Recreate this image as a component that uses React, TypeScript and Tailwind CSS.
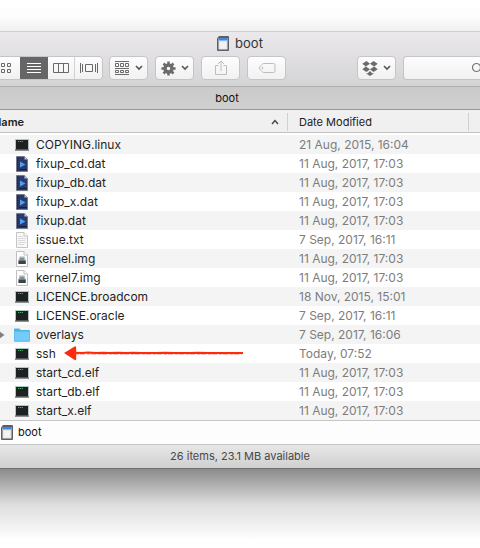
import type { ReactNode } from "react";

type Kind = "exec" | "data" | "text" | "disk" | "folder";

const files: { name: string; date: string; kind: Kind; marked?: boolean }[] = [
  { name: "COPYING.linux", date: "21 Aug, 2015, 16:04", kind: "exec" },
  { name: "fixup_cd.dat", date: "11 Aug, 2017, 17:03", kind: "data" },
  { name: "fixup_db.dat", date: "11 Aug, 2017, 17:03", kind: "data" },
  { name: "fixup_x.dat", date: "11 Aug, 2017, 17:03", kind: "data" },
  { name: "fixup.dat", date: "11 Aug, 2017, 17:03", kind: "data" },
  { name: "issue.txt", date: "7 Sep, 2017, 16:11", kind: "text" },
  { name: "kernel.img", date: "11 Aug, 2017, 17:03", kind: "disk" },
  { name: "kernel7.img", date: "11 Aug, 2017, 17:03", kind: "disk" },
  { name: "LICENCE.broadcom", date: "18 Nov, 2015, 15:01", kind: "exec" },
  { name: "LICENSE.oracle", date: "7 Sep, 2017, 16:11", kind: "exec" },
  { name: "overlays", date: "7 Sep, 2017, 16:06", kind: "folder" },
  { name: "ssh", date: "Today, 07:52", kind: "exec", marked: true },
  { name: "start_cd.elf", date: "11 Aug, 2017, 17:03", kind: "exec" },
  { name: "start_db.elf", date: "11 Aug, 2017, 17:03", kind: "exec" },
  { name: "start_x.elf", date: "11 Aug, 2017, 17:03", kind: "exec" },
];

function FileIcon({ kind }: { kind: Kind }) {
  return (
    <svg width="16" height="16" viewBox="0 0 16 16" className="shrink-0" aria-hidden="true">
      {kind === "exec" && (
        <>
          <rect x="1" y="2" width="14" height="12" fill="#b4c4c9" />
          <rect x="1" y="12" width="14" height="2" fill="#8d8f90" />
          <rect x="2" y="3" width="12" height="9.5" fill="#1e2121" />
          <path d="M4 4.5h5" stroke="#3fae55" strokeDasharray="1.3 .6" />
        </>
      )}
      {kind === "data" && (
        <>
          <path d="M2.5.5h8l3 3v12h-11z" fill="#2b3a6b" stroke="#767b8c" />
          <path d="M10.5.5v3h3z" fill="#c3c9da" />
          <path d="M3.7 2v13" stroke="#10182f" strokeDasharray="1 1" />
          <path d="M6 5.5l5.5 3L6 11.5z" fill="#4f9ff0" />
          <path d="M5 13.5h8" stroke="#161f3e" />
        </>
      )}
      {kind === "text" && (
        <>
          <path d="M2.5.5h7.5l3.5 3.5v11.5h-11z" fill="#f8f8f8" stroke="#c4c4c4" />
          <path d="M10 .5v3.5h3.5" fill="#fff" stroke="#c4c4c4" />
          <path d="M4 4.5h5M4 6.5h8M4 8.5h7M4 10.5h8M4 12.5h6" stroke="#dadada" />
        </>
      )}
      {kind === "disk" && (
        <>
          <path d="M2.5.5h7.5l3.5 3.5v11.5h-11z" fill="#fdfdfd" stroke="#c0c0c0" />
          <path d="M10 .5v3.5h3.5" fill="#fff" stroke="#c0c0c0" />
          <path d="M5.5 5.5h5l1.3 4.5H4.4z" fill="#a9b6ba" />
          <path d="M4.4 9.5h7.4v3.5H4.4z" fill="#3c4245" />
          <path d="M6 8h4" stroke="#56646a" />
        </>
      )}
      {kind === "folder" && (
        <>
          <path d="M0 2.5q0-.9.9-.9h4.4l1.3 1.3h8.5q.9 0 .9.9V14q0 .8-.8.8H.8Q0 14.8 0 14z" fill="#4fb5e6" />
          <path d="M.5 4.6h15v9.2H.5z" fill="#72ccf7" />
        </>
      )}
    </svg>
  );
}

function CardIcon() {
  return (
    <svg width="12" height="16" viewBox="0 0 12 16" className="shrink-0" aria-hidden="true">
      <path d="M2 0h9q1 0 1 1v13q0 1-1 1H1q-1 0-1-1V2.5z" fill="#5c5f63" />
      <path d="M1.5 2h9v11.5h-9z" fill="#e6e6e6" />
      <path d="M3 6h6v6.5H3z" fill="#f3f3f3" />
      <path d="M1.5 2h9v2h-9z" fill="#4388df" />
      <path d="M1.5 4h9v1h-9z" fill="#8bb7eb" />
    </svg>
  );
}

function Chevron() {
  return (
    <svg width="8" height="6" viewBox="0 0 8 6" fill="none" stroke="#555" strokeWidth="1.6" aria-hidden="true">
      <path d="M1 1l3 3 3-3" />
    </svg>
  );
}

function ToolButton({ label, children }: { label: string; children: ReactNode }) {
  return (
    <button
      type="button"
      aria-label={label}
      className="flex h-6 w-[39px] shrink-0 items-center justify-center gap-[5px] rounded-[4px] border border-[#c6c5c6] bg-linear-to-b from-[#fdfdfd] to-[#f2f1f2]"
    >
      {children}
    </button>
  );
}

function ViewSwitch() {
  return (
    <div className="-ml-2 flex h-6 w-[111px] shrink-0 overflow-hidden rounded-[4px] border border-[#c6c5c6] bg-linear-to-b from-[#fdfdfd] to-[#f2f1f2]">
      <button type="button" aria-label="Icon view" className="flex w-[27px] items-center justify-center pr-[2px]">
        <svg width="12" height="12" viewBox="0 0 12 12" fill="none" stroke="#696969" aria-hidden="true">
          <path d="M1.5 1.5h3v3h-3zM7.5 1.5h3v3h-3zM1.5 7.5h3v3h-3zM7.5 7.5h3v3h-3z" />
        </svg>
      </button>
      <button type="button" aria-label="List view" aria-pressed="true" className="flex w-7 items-center justify-center bg-[#666]">
        <svg width="14" height="12" viewBox="0 0 14 12" stroke="#fff" aria-hidden="true">
          <path d="M0 1.5h14M0 4.5h14M0 7.5h14M0 10.5h14" />
        </svg>
      </button>
      <button type="button" aria-label="Column view" className="flex w-[27px] items-center justify-center border-r border-[#d3d2d3]">
        <svg width="16" height="12" viewBox="0 0 16 12" fill="none" stroke="#696969" aria-hidden="true">
          <path d="M.5 1.5h15v9H.5zM5.5 1.5v9M10.5 1.5v9" />
        </svg>
      </button>
      <button type="button" aria-label="Gallery view" className="flex w-[27px] items-center justify-center">
        <svg width="18" height="12" viewBox="0 0 18 12" fill="none" stroke="#696969" aria-hidden="true">
          <path d="M5.5 2.5h7v7h-7zM.5 1v10M2.5 2v8M15.5 2v8M17.5 1v10" />
        </svg>
      </button>
    </div>
  );
}

function Toolbar() {
  return (
    <div className="flex h-[30px] items-start">
      <ViewSwitch />
      <div className="ml-[6px] flex gap-[7px]">
        <ToolButton label="Arrange items">
          <svg width="15" height="14" viewBox="0 0 15 14" fill="none" stroke="#696969" aria-hidden="true">
            <path d="M0 .5h14M0 7.5h14M0 13.5h14M.5 2.5h3v3h-3zM5.5 2.5h3v3h-3zM10.5 2.5h3v3h-3zM.5 9.5h3v2h-3zM5.5 9.5h3v2h-3zM10.5 9.5h3v2h-3z" />
          </svg>
          <Chevron />
        </ToolButton>
        <ToolButton label="Action">
          <svg width="15" height="15" viewBox="0 0 15 15" fill="none" stroke="#6b6b6b" aria-hidden="true">
            <circle cx="7.5" cy="7.5" r="3.5" strokeWidth="3.4" />
            <path
              d="M7.5.4v3M7.5 11.6v3M.4 7.5h3M11.6 7.5h3M2.5 2.5l2 2M10.5 10.5l2 2M2.5 12.5l2-2M10.5 4.5l2-2"
              strokeWidth="2.5"
            />
          </svg>
          <Chevron />
        </ToolButton>
        <ToolButton label="Share">
          <svg width="14" height="16" viewBox="0 0 14 16" fill="none" stroke="#bdbdbd" aria-hidden="true">
            <path d="M4.5 5.5h-3v9h11v-9h-3M7 11V1M4 4l3-3 3 3" />
          </svg>
        </ToolButton>
        <ToolButton label="Edit tags">
          <svg width="18" height="12" viewBox="0 0 18 12" fill="none" stroke="#bdbdbd" aria-hidden="true">
            <path d="M5.5 1.5h10q1.5 0 1.5 1.5v6q0 1.5-1.5 1.5h-10Q4.5 10.5 1 6 4.5 1.5 5.5 1.5z" />
            <circle cx="4.5" cy="6" r=".6" fill="#bdbdbd" />
          </svg>
        </ToolButton>
      </div>
      <div className="ml-[71px] flex min-w-0 flex-1 gap-[7px]">
        <ToolButton label="Dropbox">
          <svg width="16" height="15" viewBox="0 0 16 15" fill="#6b6b6b" aria-hidden="true">
            <path d="M4.5 0L8 2.7 3.8 5.5.3 2.8zM11.5 0l4.2 2.8-3.5 2.7L8 2.7zM.3 8.2l3.5-2.7L8 8.3 4.5 11zM15.7 8.2l-3.5-2.7L8 8.3l3.5 2.7zM4.5 11.9l1 .5L8 10l2.5 2.4 1-.5v.8L8 15l-3.5-2.3z" />
          </svg>
          <Chevron />
        </ToolButton>
        <label className="flex h-6 min-w-0 flex-1 items-center justify-end overflow-hidden rounded-l-[4px] border border-r-0 border-[#c6c5c6] bg-linear-to-b from-[#fdfdfd] to-[#f2f1f2]">
          <input type="search" aria-label="Search" className="min-w-0 flex-1 bg-transparent outline-none" />
          <svg width="8" height="12" viewBox="0 0 8 12" fill="none" stroke="#777" strokeWidth="1.2" aria-hidden="true">
            <circle cx="4.5" cy="5.5" r="4" />
          </svg>
        </label>
      </div>
    </div>
  );
}

function HandArrow() {
  return (
    <svg width="180" height="15" viewBox="0 0 180 15" className="shrink-0" fill="none" aria-hidden="true">
      <path d="M0 7L11.5 0l.7 2v11l-.7 1.5z" fill="#fb2c0d" />
      <path
        d="M10 6.7l8 .2 6-.3 8 .4 7-.2 6 .2 9-.3 8 .3 7-.2 8 .3 9-.2 7 .2 8-.3 9 .3 7-.2 9 .2 8-.3 9 .3 8-.2 8 .2H179"
        stroke="#fb2c0d"
        strokeWidth="2"
      />
      <path d="M12 8h166" stroke="#fb2c0d" strokeWidth=".6" strokeDasharray="3 1 5 2" />
    </svg>
  );
}

function FileTable() {
  return (
    <table className="w-full table-fixed border-separate border-spacing-0 text-left">
      <thead className="text-[11px] leading-[18px] text-[#222]">
        <tr className="h-[25px]">
          <th className="w-[287px] border-b-2 border-white bg-[#f0f0f0] p-0 font-semibold shadow-[inset_0_-1px_0_#c0c0c0]">
            <div className="-ml-[7px] flex items-center justify-between pr-2">
              Name
              <svg width="8" height="6" viewBox="0 0 8 6" fill="none" stroke="#444" strokeWidth="1.4" aria-hidden="true">
                <path d="M1 5l3-3.5L7 5" />
              </svg>
            </div>
          </th>
          <th className="w-[181px] border-b-2 border-white bg-[#f0f0f0] p-0 font-normal shadow-[inset_0_-1px_0_#c0c0c0]">
            <div className="border-l border-[#d0d0d0] pl-[11px]">Date Modified</div>
          </th>
          <th aria-label="Size" className="border-b-2 border-white bg-[#f0f0f0] p-0 shadow-[inset_0_-1px_0_#c0c0c0]">
            <div className="h-[18px] border-l border-[#d0d0d0]" />
          </th>
        </tr>
      </thead>
      <tbody className="text-[12px] leading-[19px]">
        {files.map((file) => (
          <tr key={file.name} className="h-[19px] odd:bg-[#f4f4f4]">
            <td className="p-0 text-[#1f1f1f]">
              <div className="flex h-[19px] items-center">
                <span className="flex w-[14px] shrink-0">
                  {file.kind === "folder" && (
                    <svg width="5" height="8" viewBox="0 0 5 8" fill="#808080" aria-hidden="true">
                      <path d="M0 .8L4.5 4 0 7.2z" />
                    </svg>
                  )}
                </span>
                <FileIcon kind={file.kind} />
                <span className="ml-[6px]">{file.name}</span>
                {file.marked && (
                  <span className="ml-2 flex">
                    <HandArrow />
                  </span>
                )}
              </div>
            </td>
            <td className="p-0 pl-3 text-[#7d7d7d]">{file.date}</td>
            <td className="p-0" />
          </tr>
        ))}
      </tbody>
    </table>
  );
}

export default function App() {
  return (
    <div className="min-h-screen overflow-hidden bg-white font-['Inter','Liberation_Sans',sans-serif]">
      <div className="h-[31px] bg-linear-to-b from-white via-[#fdfdfd] to-[#f0f0f0]" />
      <main>
        <header className="border-t border-b border-t-[#cfcfcf] border-b-[#b1b0b1] bg-linear-to-b from-[#ebe9eb] to-[#d4d3d5]">
          <div className="flex h-6 items-center justify-center gap-[6px] text-[13px] text-[#333]">
            <CardIcon />
            <h1>boot</h1>
          </div>
          <Toolbar />
        </header>
        <div className="flex h-[23px] items-center justify-center border-b border-[#999] bg-linear-to-b from-[#cbcacb] to-[#d1d0d1] pr-[26px] text-[11px] text-[#111]">
          boot
        </div>
        <FileTable />
        <div className="flex h-[25px] items-center gap-[5px] border-y border-[#c6c6c6] bg-[#fdfdfd] pl-px text-[11px] text-[#111]">
          <CardIcon />
          boot
        </div>
        <footer className="flex h-6 items-center justify-center border-b border-[#6f6f6f] bg-linear-to-b from-[#e8e7e8] to-[#d1d0d1] text-[11px] text-[#484848]">
          26 items, 23.1 MB available
        </footer>
      </main>
      <div className="h-[79px] bg-linear-to-b from-[#8b8b8b] from-0% via-[#dedede] via-45% to-white to-90%" />
    </div>
  );
}
